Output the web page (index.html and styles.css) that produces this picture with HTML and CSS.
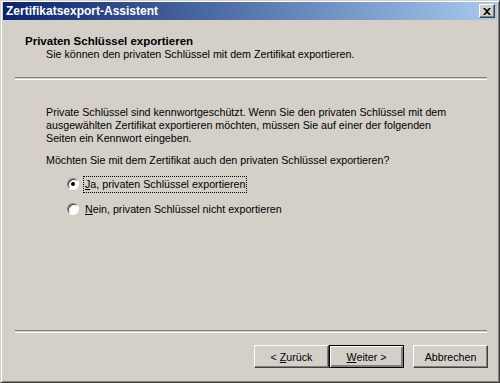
FILE: index.html
```html
<!DOCTYPE html>
<html>
<head>
<meta charset="utf-8">
<link rel="stylesheet" href="styles.css">
</head>
<body>
<div class="window">
  <div class="titlebar">
    <span class="title">Zertifikatsexport-Assistent</span>
    <span class="close"><svg width="8" height="7" viewBox="0 0 8 7"><path d="M0 0h2l2 2 2-2h2L5 3.5 8 7H6L4 5 2 7H0l3-3.5z" fill="#000"/></svg></span>
  </div>
  <div class="header">
    <div class="h-title">Privaten Schlüssel exportieren</div>
    <div class="h-sub">Sie können den privaten Schlüssel mit dem Zertifikat exportieren.</div>
  </div>
  <div class="sep"></div>
  <div class="content">
    <p class="para">Private Schlüssel sind kennwortgeschützt. Wenn Sie den privaten Schlüssel mit dem<br>ausgewählten Zertifikat exportieren möchten, müssen Sie auf einer der folgenden<br>Seiten ein Kennwort eingeben.</p>
    <p class="question">Möchten Sie mit dem Zertifikat auch den privaten Schlüssel exportieren?</p>
    <div class="radio-row">
      <span class="radio checked"></span>
      <span class="label focus"><u>J</u>a, privaten Schlüssel exportieren</span>
    </div>
    <div class="radio-row">
      <span class="radio"></span>
      <span class="label"><u>N</u>ein, privaten Schlüssel nicht exportieren</span>
    </div>
  </div>
  <div class="sep bottom"></div>
  <div class="buttons">
    <button class="btn">&lt; <u>Z</u>urück</button>
    <button class="btn default"><u>W</u>eiter &gt;</button>
    <button class="btn cancel">Abbrechen</button>
  </div>
</div>
</body>
</html>
```

FILE: styles.css
```css
html, body {
  margin: 0;
  padding: 0;
  background: #d4d0c8;
}
.window {
  width: 500px;
  height: 383px;
  box-sizing: border-box;
  background: #d4d0c8;
  border-top: 1px solid #d4d0c8;
  border-left: 1px solid #d4d0c8;
  border-right: 1px solid #404040;
  border-bottom: 1px solid #404040;
  box-shadow: inset 1px 1px 0 #ffffff, inset -1px -1px 0 #808080;
  padding: 1px 2px 2px 2px;
  display: flex;
  flex-direction: column;
  font-family: "Liberation Sans", Arial, sans-serif;
  font-size: 10.7px;
  color: #000;
  white-space: nowrap;
}
.titlebar {
  height: 18px;
  background: linear-gradient(to right, #0a246a, #a6caf0);
  display: flex;
  align-items: center;
  justify-content: space-between;
  padding: 0 2px 0 3px;
}
.title {
  color: #fff;
  font-weight: bold;
  font-size: 12px;
}
.close {
  width: 16px;
  height: 14px;
  box-sizing: border-box;
  background: #d4d0c8;
  border-top: 1px solid #fff;
  border-left: 1px solid #fff;
  border-right: 1px solid #404040;
  border-bottom: 1px solid #404040;
  box-shadow: inset -1px -1px 0 #808080;
  display: flex;
  align-items: center;
  justify-content: center;
}
.header {
  height: 57px;
  padding-left: 22px;
  box-sizing: border-box;
  padding-top: 15px;
}
.h-title {
  font-weight: bold;
  font-size: 11.5px;
  line-height: 13px;
}
.h-sub {
  padding-left: 21px;
  line-height: 13px;
}
.sep {
  margin: 0 10px 0 12px;
  height: 1px;
  border-top: 1px solid #808080;
  border-bottom: 1px solid #ffffff;
}
.content {
  flex: 1;
  padding: 26px 0 0 43px;
}
.para {
  margin: 0;
  line-height: 13px;
}
.question {
  margin: 9px 0 0 0;
  line-height: 13px;
}
.radio-row {
  display: flex;
  align-items: center;
  margin-left: 21px;
  height: 16px;
  margin-top: 9px;
}
.radio-row + .radio-row {
  margin-top: 9px;
}
.radio {
  width: 12px;
  height: 12px;
  box-sizing: border-box;
  border-radius: 50%;
  background: #fff;
  border: 1px solid;
  border-color: #808080 #ffffff #ffffff #808080;
  box-shadow: inset 1px 1px 0 #404040;
  position: relative;
  margin-right: 4px;
}
.radio.checked::after {
  content: "";
  position: absolute;
  left: 3px;
  top: 3px;
  width: 4px;
  height: 4px;
  border-radius: 50%;
  background: #000;
}
.label {
  padding: 1px 1px;
  border: 1px solid transparent;
  line-height: 13px;
}
.label.focus {
  border: 1px dotted #000;
}
.buttons {
  height: 47px;
  display: flex;
  align-items: flex-start;
  padding-top: 12px;
  box-sizing: border-box;
  padding-left: 251px;
}
.btn {
  width: 75px;
  height: 23px;
  box-sizing: border-box;
  background: #d4d0c8;
  font-family: "Liberation Sans", Arial, sans-serif;
  font-size: 10.7px;
  color: #000;
  border-top: 1px solid #fff;
  border-left: 1px solid #fff;
  border-right: 1px solid #404040;
  border-bottom: 1px solid #404040;
  box-shadow: inset -1px -1px 0 #808080;
  padding: 0;
  margin: 0;
}
.btn.default {
  border: 1px solid #000;
  box-shadow: inset 1px 1px 0 #fff, inset -2px -2px 0 #808080, inset -1px -1px 0 #404040;
}
.btn.cancel {
  margin-left: 9px;
}
```
